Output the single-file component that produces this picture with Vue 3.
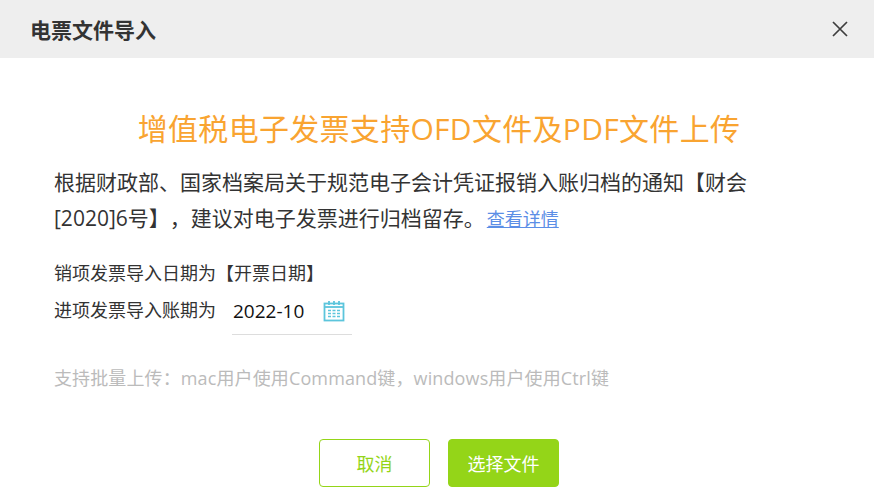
<script setup>
const period = '2022-10'
</script>

<template>
    <div class="dialog">
        <div class="header">
            <span class="header-title">电票文件导入</span>
            <svg class="close" width="16" height="16" viewBox="0 0 16 16">
                <path d="M1 1L15 15M15 1L1 15" stroke="#3d3d3d" stroke-width="1.7" fill="none" />
            </svg>
        </div>
        <div class="body">
            <h1 class="title">增值税电子发票支持OFD文件及PDF文件上传</h1>
            <p class="desc">根据财政部、国家档案局关于规范电子会计凭证报销入账归档的通知【财会[2020]6号】，建议对电子发票进行归档留存。<a class="link">查看详情</a></p>
            <div class="row first">销项发票导入日期为【开票日期】</div>
            <div class="row">
                <span>进项发票导入账期为</span>
                <div class="period">
                    <span class="period-value">{{ period }}</span>
                    <svg width="22" height="22" viewBox="0 0 22 22" fill="none" stroke="#5cc5dc">
                        <rect x="1.5" y="3.5" width="19" height="17" stroke-width="1.8" />
                        <path d="M1.5 7h19" stroke-width="1.8" />
                        <path d="M6 1v4M11 1v4M16 1v4" stroke-width="1.8" />
                        <path d="M5 10.5h3M9.5 10.5h3M14 10.5h3M5 13.5h3M9.5 13.5h3M14 13.5h3M5 16.5h3M9.5 16.5h3M14 16.5h3" stroke-width="1.3" />
                    </svg>
                </div>
            </div>
            <p class="hint">支持批量上传：mac用户使用Command键，windows用户使用Ctrl键</p>
            <div class="actions">
                <button class="btn btn-cancel">取消</button>
                <button class="btn btn-ok">选择文件</button>
            </div>
        </div>
    </div>
</template>

<style scoped>
.dialog {
    width: 874px;
    height: 498px;
    background: #fff;
    overflow: hidden;
    font-family: "Open Sans", "Noto Sans CJK SC", sans-serif;
}

.header {
    height: 58px;
    background: #eee;
    padding: 0 26px 0 30px;
    display: flex;
    align-items: center;
    justify-content: space-between;
}

.header-title {
    font-size: 21px;
    font-weight: 700;
    color: #333;
}

.body {
    padding: 0 50px 0 54px;
}

.title {
    margin: 49px 0 0;
    font-size: 30px;
    line-height: 44px;
    font-weight: 400;
    letter-spacing: 0.3px;
    text-align: center;
    color: #f9a431;
}

.desc {
    margin: 13px 0 0;
    max-width: 700px;
    font-size: 21px;
    line-height: 36px;
    text-spacing-trim: space-all;
    color: #333;
}

.link {
    margin-left: 2px;
    font-size: 18px;
    color: #5b8ee6;
    text-decoration: underline;
}

.row {
    display: flex;
    align-items: center;
    gap: 16px;
    height: 37px;
    font-size: 18px;
    color: #333;
}

.row.first {
    margin-top: 16px;
}

.period {
    width: 120px;
    height: 48px;
    box-sizing: border-box;
    border-bottom: 1px solid #ddd;
    display: flex;
    align-items: center;
    justify-content: space-between;
    padding: 0 7px 0 1px;
    margin-top: 5px;
}

.period-value {
    font-size: 19px;
    color: #111;
}

.hint {
    margin: 38px 0 0;
    font-size: 18px;
    line-height: 26px;
    letter-spacing: 0.12px;
    color: #bbb;
}

.actions {
    margin-top: 48px;
    display: flex;
    justify-content: center;
    gap: 18px;
}

.btn {
    width: 111px;
    height: 48px;
    border-radius: 4px;
    font-family: inherit;
    font-size: 18px;
    padding: 0;
}

.btn-cancel {
    background: #fff;
    border: 1px solid #94d518;
    color: #94d518;
}

.btn-ok {
    background: #94d518;
    border: 1px solid #94d518;
    color: #fff;
}
</style>

<style>
body {
    margin: 0;
}
</style>
